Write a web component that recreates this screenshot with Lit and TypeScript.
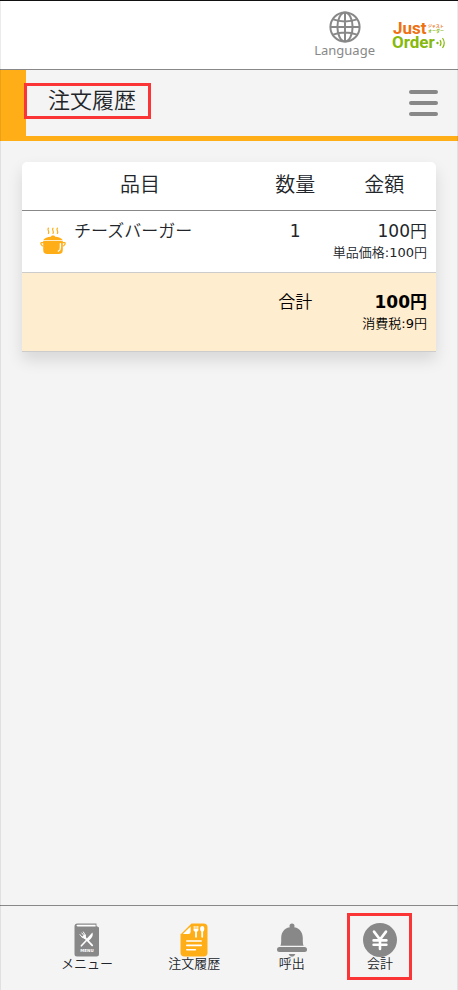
import { LitElement, html, css, svg } from "lit";
import { customElement, property } from "lit/decorators.js";

const globeIcon = svg`
  <svg class="globe" viewBox="0 0 32 32" aria-hidden="true">
    <g fill="none" stroke="currentColor" stroke-width="2">
      <circle cx="16" cy="16" r="14.6" />
      <ellipse cx="16" cy="16" rx="7.6" ry="14.6" />
      <path d="M16 1.4V30.6M1.4 16H30.6M4 8.4Q16 12.4 28 8.4M4 23.6Q16 19.6 28 23.6" />
    </g>
  </svg>`;

const potIcon = svg`
  <svg class="pot" viewBox="0 0 26 28" aria-hidden="true">
    <g fill="none" stroke="currentColor" stroke-width="1.2" stroke-linecap="round">
      <path d="M8.4 1.2c-1.8 1.6 1.6 2.8 0 5.2M13 1.2c-1.8 1.6 1.6 2.8 0 5.2M17.400 1.200c-1.800 1.600 1.600 2.800 0 5.200" />
      <path d="M3.400 15.600H1.400Q.8 15.600.8 16.400t1.600 2.400M22.600 15.600h2q.6 0 .6.8t-1.600 2.400" />
    </g>
    <path fill="currentColor" d="M3.200 13.200C4.400 11 7.600 10 10.800 9.800c.4-1.600 4-1.600 4.400 0 3.200.2 6.400 1.200 7.600 3.400z" />
    <path fill="currentColor" d="M3.200 14H22.800V22.400Q22.800 27 18.600 27H7.400Q3.200 27 3.200 22.400z" />
    <path fill="none" stroke="#fff" stroke-width="1.400" stroke-linecap="round" d="M20.400 16.600v3.800q0 3-2 3.800" />
  </svg>`;

const menuIcon = svg`
  <svg class="icon" width="26" height="34" viewBox="0 0 26 34" aria-hidden="true">
    <path fill="#888" d="M3.500.5H22.500V3l2.500 1.400V31q0 2.500-2.500 2.500H3Q.5 33.500.5 31V3.500q0-3 3-3z" />
    <path fill="#fff" d="M3.600 1.700H21.600V3.400H3.600Q2.500 3.400 2.500 2.600t1.100-.9z" />
    <g stroke="#fff" stroke-linecap="round" fill="none">
      <path stroke-width="1.800" d="M10.800 14.600L18.200 22.400" />
      <path stroke-width="1" d="M6 11.600l2.600 3.200M7.800 10l2.700 3.200M9.400 9l2 3.400" />
      <path stroke-width="1.600" d="M7.400 22.800L12.800 17" />
    </g>
    <path fill="#fff" d="M8 13.500l3.400-2.200.8 3.400-2 1.400zM12 16.600l6.400-7.200q1.200 2.800-1.400 6l-3 3.200z" />
    <text x="13" y="29.400" text-anchor="middle" font-size="4" font-weight="700" fill="#fff">MENU</text>
  </svg>`;

const historyIcon = svg`
  <svg class="icon" width="28" height="34" viewBox="0 0 28 34" aria-hidden="true">
    <path fill="#ffae17" d="M11.500.5H23.500Q27.500.5 27.500 4.500V29.500Q27.500 33.500 23.500 33.500H4.500Q.5 33.500.5 29.500V11.500z" />
    <path fill="#fff" d="M10.600 3.400V8.800q0 2.200-2.200 2.200H2.800z" />
    <g stroke="#fff" stroke-linecap="round" fill="none">
      <path stroke-width="1.600" d="M6.800 18h14.400M6.800 22.400h14.400M6.800 26.800h8.600" />
      <path stroke-width="1" d="M14.200 3.400v4M16 3.400v4M17.800 3.400v4" />
      <path stroke-width="1.800" d="M16 8v5.800M22.200 8v5.800" />
    </g>
    <path fill="#fff" d="M13.700 6h4.600q0 3-2.300 3t-2.300-3z" />
    <ellipse cx="22.200" cy="5.800" rx="2.100" ry="2.900" fill="#fff" />
  </svg>`;

const bellIcon = svg`
  <svg class="icon" width="32" height="34" viewBox="0 0 32 34" aria-hidden="true">
    <g fill="#888">
      <circle cx="16" cy="3" r="2.500" />
      <path d="M16 4C22.500 4 26.800 8.500 26.800 15v3.400q0 2.600.8 4.400H4.400q.8-1.800.8-4.400V15C5.200 8.500 9.500 4 16 4z" />
      <rect x="1" y="24" width="30" height="5" rx="2.500" />
      <path d="M12.600 31h6.800q-1 2.800-3.400 2.800T12.600 31z" />
    </g>
  </svg>`;

const yenIcon = svg`
  <svg class="icon" width="34" height="34" viewBox="0 0 34 34" aria-hidden="true">
    <circle cx="17" cy="17" r="17" fill="#888" />
    <path fill="none" stroke="#fff" stroke-width="2.600" stroke-linecap="round" d="M11 8.600L17 16.600L23 8.600M17 17V26M10.600 17.400H23.400M10.600 21.800H23.400" />
  </svg>`;

const base = css`
  :host,
  * {
    box-sizing: border-box;
  }
  button {
    margin: 0;
    padding: 0;
    border: 0;
    background: none;
    font: inherit;
    color: inherit;
    cursor: pointer;
  }
`;

@customElement("brand-bar")
export class BrandBar extends LitElement {
  static styles = [
    base,
    css`
      :host {
        display: flex;
        justify-content: flex-end;
        align-items: center;
        gap: 16px;
        height: 70px;
        padding: 0 11px 2px;
        background: #fff;
        border-top: 1px solid #111;
        border-bottom: 1px solid #888;
      }
      .language {
        display: flex;
        flex-direction: column;
        align-items: center;
        color: #888;
        font: 13px/14px "Noto Sans", sans-serif;
      }
      .globe {
        width: 32px;
        height: 32px;
      }
      .logo {
        width: 56px;
        height: 34px;
        overflow: visible;
        font-family: Roboto, "Noto Sans CJK JP", sans-serif;
      }
      .name {
        font-size: 17px;
        font-weight: 700;
      }
      .kana {
        font-size: 4px;
        font-weight: 700;
      }
      .orange {
        fill: #ee7111;
      }
      .green {
        fill: #86b90c;
      }
    `,
  ];

  render() {
    return html`
      <button class="language">${globeIcon}<span>Language</span></button>
      <svg class="logo" viewBox="0 0 56 34" role="img" aria-label="Just Order">
        <text class="name orange" x="2" y="17">Just</text>
        <text class="name green" x="1" y="31">Order</text>
        <text class="kana orange" x="37" y="11">ジャスト</text>
        <text class="kana green" x="37" y="16">オーダー</text>
        <circle class="green" cx="46.500" cy="26" r="1.200" />
        <path d="M49 23q2 3 0 6M51.500 21q3.500 5 0 10" fill="none" stroke="#86b90c" stroke-width="1.200" />
      </svg>
    `;
  }
}

@customElement("title-bar")
export class TitleBar extends LitElement {
  @property() heading = "";

  static styles = [
    base,
    css`
      :host {
        display: flex;
        align-items: center;
        justify-content: space-between;
        height: 71px;
        padding-right: 20px;
        border-left: 26px solid #ffae17;
        border-bottom: 5px solid #ffae17;
      }
      h1 {
        position: relative;
        margin: 0 0 4px;
        padding: 0 16px 0 22px;
        font-size: 22px;
        line-height: 36px;
        font-weight: inherit;
      }
      h1::after {
        content: "";
        position: absolute;
        inset: 0 1px 0 -2px;
        border: 3px solid #fb3535;
      }
      .burger {
        display: flex;
        flex-direction: column;
        gap: 7px;
      }
      .bar {
        width: 29px;
        height: 4px;
        border-radius: 2px;
        background: #888;
      }
    `,
  ];

  render() {
    return html`
      <h1>${this.heading}</h1>
      <button class="burger" aria-label="メニュー">
        <span class="bar"></span><span class="bar"></span><span class="bar"></span>
      </button>
    `;
  }
}

@customElement("order-table")
export class OrderTable extends LitElement {
  static styles = [
    base,
    css`
      :host {
        display: block;
        margin: 21px 22px;
        border-radius: 5px 5px 0 0;
        background: #fff;
        box-shadow: 0 8px 16px rgba(0, 0, 0, 0.12);
      }
      table {
        width: 100%;
        table-layout: fixed;
        border-collapse: separate;
        border-spacing: 0;
      }
      th,
      td {
        padding: 0;
        vertical-align: top;
        font-weight: inherit;
      }
      .name-col {
        width: 57%;
      }
      .count-col {
        width: 18%;
      }
      thead th {
        height: 49px;
        padding-top: 9px;
        font-size: 20px;
        line-height: 28px;
        border-bottom: 1px solid #888;
      }
      tbody td,
      tfoot td,
      tfoot th {
        padding-top: 8px;
        font-size: 17px;
        line-height: 24px;
        text-align: center;
        border-bottom: 1px solid #ccc;
      }
      tbody td {
        height: 62px;
      }
      tfoot td,
      tfoot th {
        height: 79px;
        padding-top: 17px;
        background: #ffedcf;
        color: #000;
      }
      .item {
        display: flex;
        gap: 8px;
        padding-left: 18px;
      }
      .pot {
        width: 26px;
        height: 28px;
        margin-top: 8px;
        color: #ffae17;
      }
      .num {
        font-weight: 400;
      }
      .price {
        padding-right: 9px;
        text-align: right;
        white-space: nowrap;
      }
      .price strong {
        font-weight: 700;
      }
      .note {
        display: block;
        font-size: 13px;
        line-height: 20px;
      }
    `,
  ];

  render() {
    return html`
      <table>
        <thead>
          <tr>
            <th class="name-col" scope="col">品目</th>
            <th class="count-col" scope="col">数量</th>
            <th scope="col">金額</th>
          </tr>
        </thead>
        <tbody>
          <tr>
            <td><div class="item">${potIcon}<span>チーズバーガー</span></div></td>
            <td><span class="num">1</span></td>
            <td>
              <div class="price">
                <span class="num">100</span>円<span class="note">単品価格<span class="num">:100</span>円</span>
              </div>
            </td>
          </tr>
        </tbody>
        <tfoot>
          <tr>
            <td></td>
            <th scope="row">合計</th>
            <td>
              <div class="price">
                <strong>100円</strong><span class="note">消費税<span class="num">:9</span>円</span>
              </div>
            </td>
          </tr>
        </tfoot>
      </table>
    `;
  }
}

@customElement("bottom-nav")
export class BottomNav extends LitElement {
  private items = [
    { label: "メニュー", icon: menuIcon, marked: false },
    { label: "注文履歴", icon: historyIcon, marked: false },
    { label: "呼出", icon: bellIcon, marked: false },
    { label: "会計", icon: yenIcon, marked: true },
  ];

  static styles = [
    base,
    css`
      :host {
        display: block;
        border-top: 1px solid #888;
      }
      nav {
        display: flex;
        justify-content: space-between;
        padding: 17px 61px 20px;
      }
      .entry {
        position: relative;
        display: flex;
        flex-direction: column;
        align-items: center;
        font-size: 13px;
        line-height: 13px;
      }
      .icon {
        display: block;
      }
      .marked::after {
        content: "";
        position: absolute;
        inset: -10px -15px -10px -16px;
        border: 3px solid #fb3535;
      }
    `,
  ];

  render() {
    return html`
      <nav>
        ${this.items.map(
          (item) => html`
            <button class="entry ${item.marked ? "marked" : ""}">${item.icon}<span>${item.label}</span></button>
          `,
        )}
      </nav>
    `;
  }
}

@customElement("app-root")
export class AppRoot extends LitElement {
  static styles = css`
    :host {
      position: relative;
      display: flex;
      flex-direction: column;
      min-height: 100vh;
      background: #f4f4f4;
      color: #212529;
      font-family: "DejaVu Sans", "Noto Sans CJK JP", sans-serif;
      font-weight: 350;
    }
    :host::after {
      content: "";
      position: absolute;
      inset: 0;
      border: solid rgba(0, 0, 0, 0.08);
      border-width: 0 1px;
      pointer-events: none;
    }
    main {
      flex: 1;
    }
  `;

  render() {
    return html`
      <brand-bar></brand-bar>
      <title-bar heading="注文履歴"></title-bar>
      <main><order-table></order-table></main>
      <bottom-nav></bottom-nav>
    `;
  }
}
